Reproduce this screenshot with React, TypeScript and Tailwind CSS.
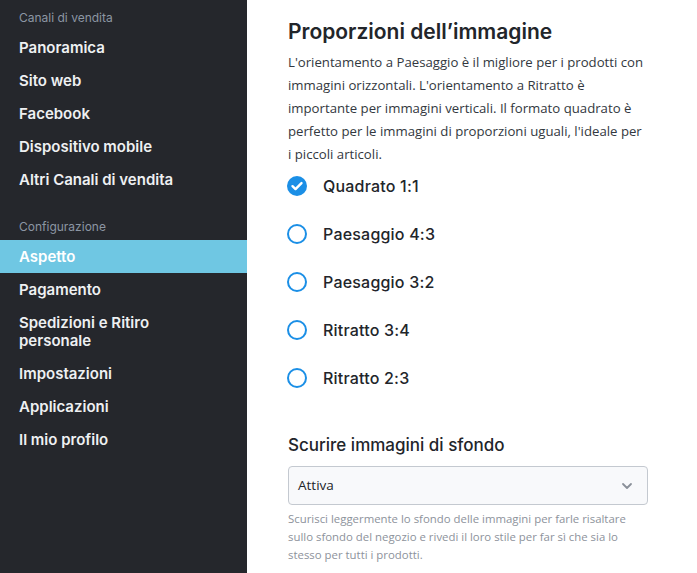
import React from "react";

const sections = [
  {
    title: "Canali di vendita",
    items: ["Panoramica", "Sito web", "Facebook", "Dispositivo mobile", "Altri Canali di vendita"],
  },
  {
    title: "Configurazione",
    items: ["Aspetto", "Pagamento", "Spedizioni e Ritiro personale", "Impostazioni", "Applicazioni", "Il mio profilo"],
  },
];

const ratios = ["Quadrato 1:1", "Paesaggio 4:3", "Paesaggio 3:2", "Ritratto 3:4", "Ritratto 2:3"];

const Radio: React.FC<{ checked: boolean }> = ({ checked }) =>
  checked ? (
    <svg width="20" height="20" viewBox="0 0 20 20">
      <circle cx="10" cy="10" r="10" fill="#1b8fe6" />
      <path d="M5.5 10.2l3 2.9 6-6" fill="none" stroke="#fff" strokeWidth="2.4" strokeLinecap="round" strokeLinejoin="round" />
    </svg>
  ) : (
    <svg width="20" height="20" viewBox="0 0 20 20">
      <circle cx="10" cy="10" r="9" fill="none" stroke="#1b8fe6" strokeWidth="2" />
    </svg>
  );

export default function App() {
  return (
    <div className="flex h-[573px] w-[697px] overflow-hidden bg-white font-['Inter',sans-serif]">
      <aside className="w-[247px] shrink-0 bg-[#25272c] pt-[10px]">
        {sections.map((s, si) => (
          <div key={s.title} className={si > 0 ? "mt-[23px]" : ""}>
            <div className="px-[19px] text-[12px] leading-[16px] text-[#8c96a3]">{s.title}</div>
            <ul className="mt-[5px]">
              {s.items.map((item) => (
                <li
                  key={item}
                  className={`px-[19px] pt-[8px] pb-[7px] pr-[70px] text-[15px] font-semibold leading-[18px] text-[#eef0f2] ${
                    item === "Aspetto" ? "bg-[#6fc7e3] text-white" : ""
                  }`}
                >
                  {item}
                </li>
              ))}
            </ul>
          </div>
        ))}
      </aside>
      <main className="w-[360px] pl-[41px] pt-[18px] box-content">
        <h2 className="text-[21px] font-semibold leading-[27px] text-[#22252a]">Proporzioni dell’immagine</h2>
        <p className="mt-[6px] font-['Open_Sans',sans-serif] text-[13.2px] leading-[23px] text-[#333840]">
          L'orientamento a Paesaggio è il migliore per i prodotti con immagini orizzontali. L'orientamento a Ritratto è
          importante per immagini verticali. Il formato quadrato è perfetto per le immagini di proporzioni uguali, l'ideale per
          i piccoli articoli.
        </p>
        <div className="mt-[10px] flex flex-col gap-[28px]">
          {ratios.map((r, i) => (
            <label key={r} className="flex items-center gap-[16px] -ml-px">
              <Radio checked={i === 0} />
              <span className="text-[16px] font-medium leading-[20px] tracking-[0.2px] text-[#22252a]">{r}</span>
            </label>
          ))}
        </div>
        <h3 className="mt-[46px] text-[17px] font-medium leading-[22px] text-[#22252a]">Scurire immagini di sfondo</h3>
        <div className="mt-[10px] flex h-[39px] items-center justify-between rounded-[4px] border border-[#c4c9d0] bg-[#f8f9fb] px-[9px] font-['Open_Sans',sans-serif] text-[13.5px] text-[#22252a]">
          <span>Attiva</span>
          <svg width="14" height="14" viewBox="0 0 14 14" className="mr-[4px]">
            <path d="M3 5l4 4 4-4" fill="none" stroke="#8a9099" strokeWidth="1.8" strokeLinecap="round" strokeLinejoin="round" />
          </svg>
        </div>
        <p className="mt-[5px] font-['Open_Sans',sans-serif] text-[11.4px] leading-[18px] text-[#8d929b]">
          Scurisci leggermente lo sfondo delle immagini per farle risaltare sullo sfondo del negozio e rivedi il loro stile per far sì che sia lo stesso per tutti i prodotti.
        </p>
      </main>
    </div>
  );
}
